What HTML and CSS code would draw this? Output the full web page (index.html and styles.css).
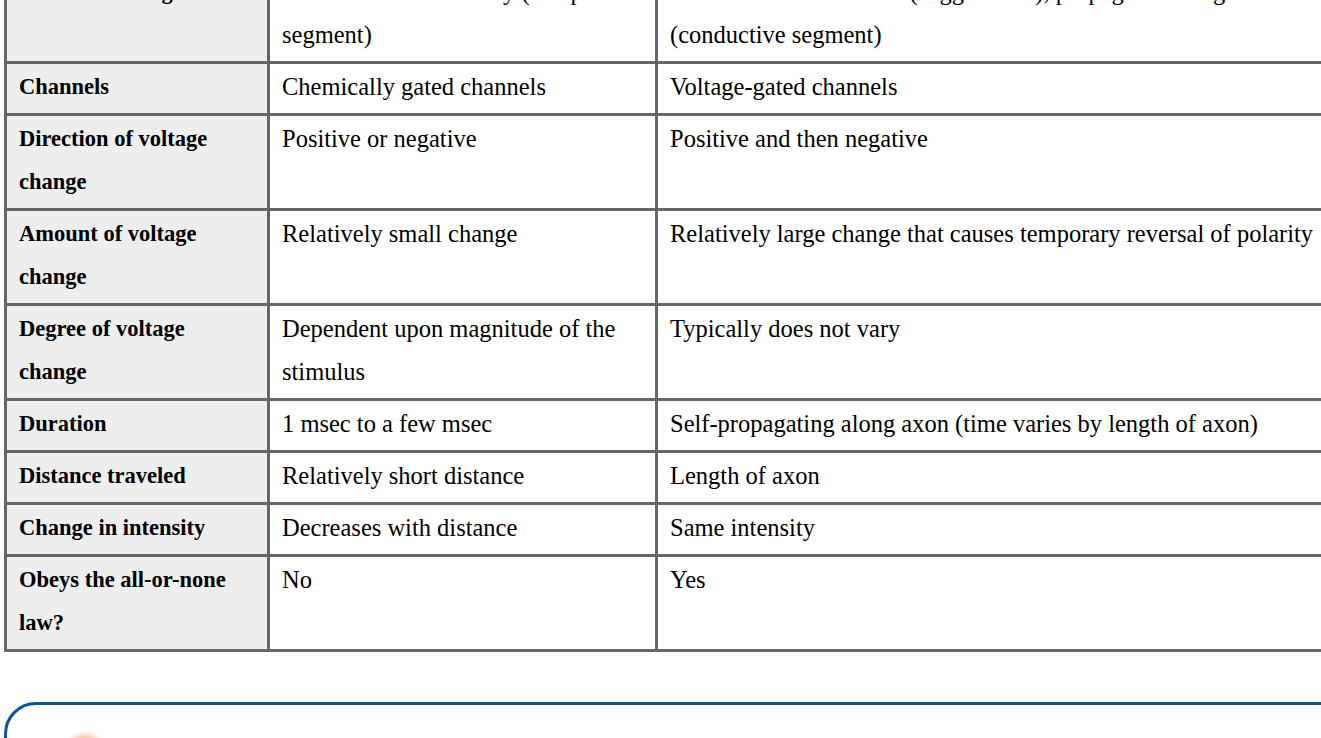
FILE: index.html
```html
<!DOCTYPE html>
<html lang="en">
<head>
<meta charset="utf-8">
<title>Graded potentials vs action potentials</title>
<link rel="stylesheet" href="styles.css">
</head>
<body>
<div class="page">
  <table class="compare">
    <colgroup>
      <col class="c1">
      <col class="c2">
      <col class="c3">
    </colgroup>
    <tbody>
      <tr>
        <th>Location of origin</th>
        <td>Dendrites and cell body (receptive segment)</td>
        <td>Initiated at axon hillock (trigger zone), propagated along the axon (conductive segment)</td>
      </tr>
      <tr>
        <th>Channels</th>
        <td>Chemically gated channels</td>
        <td>Voltage-gated channels</td>
      </tr>
      <tr>
        <th>Direction of voltage change</th>
        <td>Positive or negative</td>
        <td>Positive and then negative</td>
      </tr>
      <tr>
        <th>Amount of voltage change</th>
        <td>Relatively small change</td>
        <td>Relatively large change that causes temporary reversal of polarity</td>
      </tr>
      <tr>
        <th>Degree of voltage change</th>
        <td>Dependent upon magnitude of the stimulus</td>
        <td>Typically does not vary</td>
      </tr>
      <tr>
        <th>Duration</th>
        <td>1 msec to a few msec</td>
        <td>Self-propagating along axon (time varies by length of axon)</td>
      </tr>
      <tr>
        <th>Distance traveled</th>
        <td>Relatively short distance</td>
        <td>Length of axon</td>
      </tr>
      <tr>
        <th>Change in intensity</th>
        <td>Decreases with distance</td>
        <td>Same intensity</td>
      </tr>
      <tr>
        <th>Obeys the all-or-none law?</th>
        <td>No</td>
        <td>Yes</td>
      </tr>
    </tbody>
  </table>

  <div class="note">
    <div class="note-icon"></div>
  </div>
</div>
</body>
</html>
```

FILE: styles.css
```css
html, body {
  margin: 0;
  padding: 0;
  background: #ffffff;
  overflow: hidden;
}

body {
  font-family: "Liberation Serif", "Times New Roman", serif;
  color: #000000;
}

.page {
  width: 1360px;
  padding-left: 4px;
  margin-top: -34px;
}

.compare {
  border-collapse: collapse;
  table-layout: fixed;
  width: 1350px;
  border: 3px solid #666666;
  font-size: 24.5px;
  line-height: 43px;
}

.compare .c1 { width: 263px; }
.compare .c2 { width: 388px; }
.compare .c3 { width: 699px; }

.compare th,
.compare td {
  border: 3px solid #666666;
  padding: 1px 12px 5px;
  vertical-align: top;
  text-align: left;
}

.compare th {
  background: #eeeeee;
  font-weight: bold;
  font-size: 22.5px;
}

.note {
  margin-top: 50px;
  height: 120px;
  border: 3px solid #0b5394;
  border-radius: 32px;
  padding: 26px 0 0 56px;
}

.note-icon {
  width: 44px;
  height: 44px;
  border-radius: 50%;
  background: radial-gradient(circle, #f0a070 0%, #f6c4a4 45%, rgba(255,255,255,0) 72%);
}
```
